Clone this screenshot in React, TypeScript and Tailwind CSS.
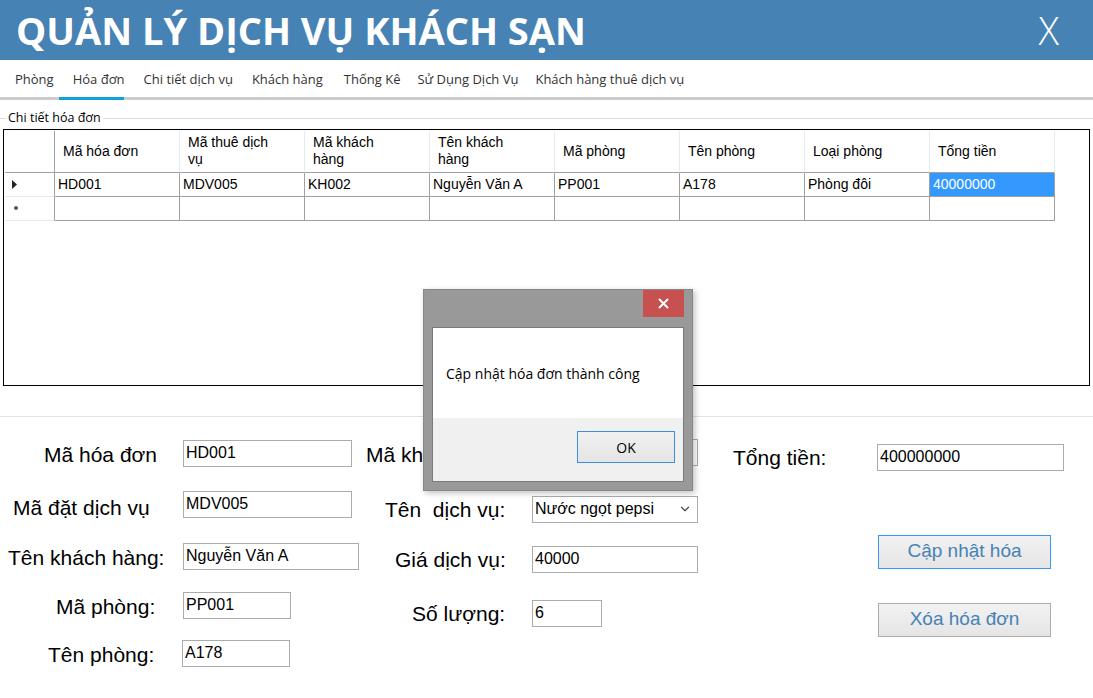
import { ChevronDown } from 'lucide-react'

// ─── Data ─────────────────────────────────────────────────────────────────────

const TABS = [
  { label: 'Phòng',                   gap: 'ml-[15px]' },
  { label: 'Hóa đơn',                 gap: 'ml-[19px]' },
  { label: 'Chi tiết dịch vụ',        gap: 'ml-[19px]' },
  { label: 'Khách hàng',              gap: 'ml-[19px]' },
  { label: 'Thống Kê',                gap: 'ml-[21px]' },
  { label: 'Sử Dụng Dịch Vụ',         gap: 'ml-[17px]' },
  { label: 'Khách hàng thuê dịch vụ', gap: 'ml-[17px]' },
]

const COLUMNS = [
  'Mã hóa đơn',
  'Mã thuê dịch vụ',
  'Mã khách hàng',
  'Tên khách hàng',
  'Mã phòng',
  'Tên phòng',
  'Loại phòng',
  'Tổng tiền',
]

const ROW = ['HD001', 'MDV005', 'KH002', 'Nguyễn Văn A', 'PP001', 'A178', 'Phòng đôi', '40000000']

const UI = "font-['Open_Sans','Noto_Sans',sans-serif]"
const MS = "font-['Liberation_Sans',Arial,sans-serif]"

// ─── Small pieces ─────────────────────────────────────────────────────────────

function TextBox({ value, className }: { value: string; className: string }) {
  return (
    <div
      className={`flex h-[27px] items-center border border-[#ababab] bg-white pl-[2px] text-[16px] text-black ${className}`}
    >
      {value}
    </div>
  )
}

function Label({ text, className }: { text: string; className: string }) {
  return <span className={`shrink-0 text-[21px] leading-none text-black ${className}`}>{text}</span>
}

// ─── App ──────────────────────────────────────────────────────────────────────

export default function App() {
  return (
    <div className={`relative h-[698px] w-[1093px] overflow-hidden bg-white ${MS}`}>
      {/* ── Header ─────────────────────────────────────────────────────── */}
      <header className="flex h-[60px] items-center justify-between bg-[#4682b4] pl-[16px] pr-[34px] text-white">
        <h1 className={`${UI} text-[38px] font-bold leading-none`}>
          QUẢN LÝ DỊCH VỤ KHÁCH SẠN
        </h1>
        <span className={`${UI} text-[38px] font-light leading-none`}>X</span>
      </header>

      {/* ── Tabs ───────────────────────────────────────────────────────── */}
      <nav className={`${UI} flex h-[40px] border-b-[3px] border-[#cccccc] pt-[3px] text-[13px] text-[#333]`}>
        {TABS.map((tab, i) => (
          <div key={tab.label} className={`relative flex h-full items-center ${tab.gap}`}>
            <span>{tab.label}</span>
            {i === 1 && (
              <div className="absolute -bottom-[3px] -left-[14px] h-[3px] w-[65px] bg-[#12a0d8]" />
            )}
          </div>
        ))}
      </nav>

      {/* ── Group box: Chi tiết hóa đơn ───────────────────────────────── */}
      <section className="pt-[12px]">
        <div className="flex items-center">
          <div className="h-px w-[6px] bg-[#dcdcdc]" />
          <span className={`${UI} px-[2px] text-[12.5px] leading-none text-black`}>Chi tiết hóa đơn</span>
          <div className="h-px flex-1 bg-[#dcdcdc]" />
        </div>

        <div className="ml-[3px] mr-[3px] mt-[4px] h-[257px] border border-black bg-white pl-px pt-px">
          <div className="grid grid-cols-[50px_repeat(8,125px)] text-[14px] text-black">
            {/* header row */}
            <div className="h-[42px] border-b border-r border-b-[#a0a0a0] border-r-[#a0a0a0]" />
            {COLUMNS.map(col => (
              <div
                key={col}
                className="flex h-[42px] items-center border-b border-r border-b-[#a0a0a0] border-r-[#e3ebf5] pl-[8px] pr-[30px] leading-[17px]"
              >
                {col}
              </div>
            ))}

            {/* data row */}
            <div className="flex h-[24px] items-center border-b border-r border-b-[#e3ebf5] border-r-[#a0a0a0] pl-[7px]">
              <svg width="5" height="9" viewBox="0 0 5 9">
                <path d="M0 0 L5 4.5 L0 9 Z" fill="#222" />
              </svg>
            </div>
            {ROW.map((cell, i) => (
              <div
                key={i}
                className={
                  i === ROW.length - 1
                    ? 'flex h-[24px] items-center border-b border-r border-[#a0a0a0] bg-[#3399ff] pl-[3px] text-white'
                    : 'flex h-[24px] items-center border-b border-r border-[#a0a0a0] pl-[3px]'
                }
              >
                {cell}
              </div>
            ))}

            {/* new row */}
            <div className="flex h-[24px] items-center border-b border-r border-b-[#e3ebf5] border-r-[#a0a0a0] pl-[9px]">
              <span className="h-[4px] w-[4px] rounded-full bg-[#555]" />
            </div>
            {COLUMNS.map(col => (
              <div key={col} className="h-[24px] border-b border-r border-[#a0a0a0]" />
            ))}
          </div>
        </div>
      </section>

      <div className="mt-[30px] h-px bg-[#e3e3e3]" />

      {/* ── Form ───────────────────────────────────────────────────────── */}
      <section className="flex">
        {/* left column */}
        <div className="flex w-[360px] flex-col pt-[23px]">
          <div className="flex items-center">
            <Label text="Mã hóa đơn" className="mt-[3px] w-[183px] pl-[44px]" />
            <TextBox value="HD001" className="w-[169px]" />
          </div>
          <div className="mt-[24px] flex items-center">
            <Label text="Mã đặt dịch vụ" className="mt-[6px] w-[183px] pl-[13px]" />
            <TextBox value="MDV005" className="w-[169px]" />
          </div>
          <div className="mt-[25px] flex items-center">
            <Label text="Tên khách hàng:" className="mt-[3px] w-[183px] pl-[8px]" />
            <TextBox value="Nguyễn Văn A" className="w-[176px]" />
          </div>
          <div className="mt-[22px] flex items-center">
            <Label text="Mã phòng:" className="mt-[2px] w-[183px] pl-[56px]" />
            <TextBox value="PP001" className="w-[108px]" />
          </div>
          <div className="mt-[21px] flex items-center">
            <Label text="Tên phòng:" className="mt-[2px] w-[182px] pl-[48px]" />
            <TextBox value="A178" className="w-[108px]" />
          </div>
        </div>

        {/* middle column */}
        <div className="flex w-[345px] flex-col pt-[22px]">
          <div className="flex items-center">
            <Label text="Mã khách hàng:" className="mt-[4px] w-[173px] pl-[6px]" />
            <TextBox value="KH002" className="w-[165px]" />
          </div>
          <div className="mt-[30px] flex items-center">
            <Label text="Tên  dịch vụ:" className="w-[172px] whitespace-pre pl-[25px]" />
            <div className="flex h-[27px] w-[166px] items-center justify-between border border-[#ababab] bg-white pl-[2px] pr-[5px] text-[16px]">
              <span>Nước ngọt pepsi</span>
              <ChevronDown className="h-[14px] w-[14px] text-[#444]" strokeWidth={2} />
            </div>
          </div>
          <div className="mt-[23px] flex items-center">
            <Label text="Giá dịch vụ:" className="w-[172px] pl-[35px]" />
            <TextBox value="40000" className="w-[166px]" />
          </div>
          <div className="mt-[27px] flex items-center">
            <Label text="Số lượng:" className="mt-[1px] w-[172px] pl-[52px]" />
            <TextBox value="6" className="w-[70px]" />
          </div>
        </div>

        {/* right column */}
        <div className="flex flex-1 flex-col pt-[27px]">
          <div className="flex items-center">
            <Label text="Tổng tiền:" className="mt-[1px] w-[172px] pl-[28px]" />
            <TextBox value="400000000" className="w-[187px]" />
          </div>
          <div className="ml-[173px] mt-[64px] flex h-[34px] w-[173px] items-center justify-center border border-[#3399ff] bg-gradient-to-b from-[#f2f2f2] to-[#e5e5e5] text-[19px] text-[#4682b4]">
            Cập nhật hóa
          </div>
          <div className="ml-[173px] mt-[34px] flex h-[34px] w-[173px] items-center justify-center border border-[#adadad] bg-gradient-to-b from-[#f2f2f2] to-[#e5e5e5] text-[19px] text-[#4682b4]">
            Xóa hóa đơn
          </div>
        </div>
      </section>

      {/* ── Message box (overlay) ─────────────────────────────────────── */}
      <div className="absolute left-[423px] top-[289px] flex h-[202px] w-[270px] flex-col border border-[#888] bg-[#999999] px-[8px] pb-[8px] shadow-[2px_2px_6px_rgba(0,0,0,0.25)]">
        <div className="flex h-[37px] justify-end">
          <div className="flex h-[27px] w-[41px] items-center justify-center bg-[#c75050] text-white">
            <svg width="11" height="11" viewBox="0 0 11 11">
              <path d="M1 1 L10 10 M10 1 L1 10" stroke="#fff" strokeWidth="2" />
            </svg>
          </div>
        </div>
        <div className={`${UI} flex flex-1 flex-col border border-[#7a7a7a]`}>
          <div className="flex h-[90px] items-center bg-white pl-[13px] text-[14px] text-black">
            Cập nhật hóa đơn thành công
          </div>
          <div className="flex flex-1 items-start justify-end bg-[#f0f0f0] pr-[8px] pt-[13px]">
            <div className="flex h-[32px] w-[98px] items-center justify-center border border-[#3c8de6] bg-gradient-to-b from-[#f0f0f0] to-[#e5e5e5] text-[14px] text-black">
              OK
            </div>
          </div>
        </div>
      </div>
    </div>
  )
}
